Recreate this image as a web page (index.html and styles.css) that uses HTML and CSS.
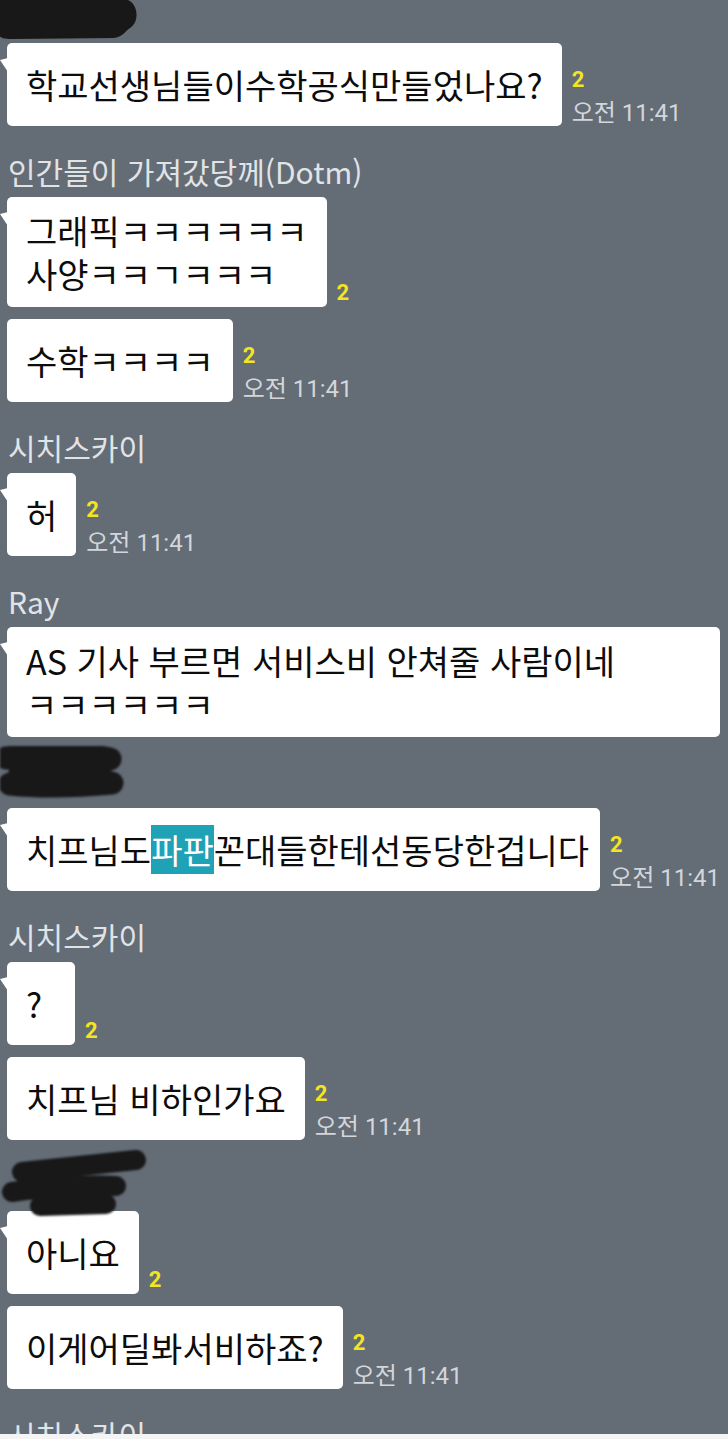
FILE: index.html
```html
<!DOCTYPE html>
<html lang="ko">
<head>
  <meta charset="UTF-8" />
  <meta name="viewport" content="width=device-width, initial-scale=1.0"/>
  <title>단톡방</title>
  <link rel="stylesheet" href="styles.css">
</head>
<body>

  <div class="screen">

    <div class="group">
      <div class="sender">
        <svg class="mark m1" width="145" height="42" viewBox="0 0 145 42">
          <path d="M0 0 L128 0 C138 4, 140 22, 130 28 C124 32, 124 36, 114 38 L12 39 C5 39, 0 38, 0 36 Z" />
        </svg>
      </div>
      <div class="row">
        <div class="bubble tail"><span>학교선생님들이수학공식만들었나요?</span></div>
        <div class="meta"><span class="unread">2</span><span class="time">오전 11:41</span></div>
      </div>
    </div>

    <div class="group">
      <div class="sender">인간들이 가져갔당께(Dotm)</div>
      <div class="row">
        <div class="bubble tail"><span>그래픽ㅋㅋㅋㅋㅋㅋ<br>사양ㅋㅋㄱㅋㅋㅋ</span></div>
        <div class="meta"><span class="unread">2</span></div>
      </div>
      <div class="row">
        <div class="bubble"><span>수학ㅋㅋㅋㅋ</span></div>
        <div class="meta"><span class="unread">2</span><span class="time">오전 11:41</span></div>
      </div>
    </div>

    <div class="group">
      <div class="sender">시치스카이</div>
      <div class="row">
        <div class="bubble tail"><span>허</span></div>
        <div class="meta"><span class="unread">2</span><span class="time">오전 11:41</span></div>
      </div>
    </div>

    <div class="group">
      <div class="sender">Ray</div>
      <div class="row">
        <div class="bubble tail"><span>AS 기사 부르면 서비스비 안쳐줄 사람이네 ㅋㅋㅋㅋㅋㅋ</span></div>
      </div>
    </div>

    <div class="group">
      <div class="sender">
        <svg class="scribble s2" width="130" height="56" viewBox="0 0 130 56">
          <path d="M6 12 C40 8, 80 7, 110 13" />
          <path d="M10 38 C40 41, 80 40, 112 37" />
          <path d="M20 26 L100 24" />
        </svg>
      </div>
      <div class="row">
        <div class="bubble tail"><span>치프님도<span class="hl">파판</span>꼰대들한테선동당한겁니다</span></div>
        <div class="meta"><span class="unread">2</span><span class="time">오전 11:41</span></div>
      </div>
    </div>

    <div class="group">
      <div class="sender">시치스카이</div>
      <div class="row">
        <div class="bubble tail"><span>?</span></div>
        <div class="meta"><span class="unread">2</span></div>
      </div>
      <div class="row">
        <div class="bubble"><span>치프님 비하인가요</span></div>
        <div class="meta"><span class="unread">2</span><span class="time">오전 11:41</span></div>
      </div>
    </div>

    <div class="group">
      <div class="sender">
        <svg class="scribble s3" width="150" height="72" viewBox="0 0 150 72">
          <path d="M22 22 L136 10" />
          <path d="M12 42 C40 38, 90 34, 116 36" />
          <path d="M40 56 L106 54" />
        </svg>
      </div>
      <div class="row">
        <div class="bubble tail"><span>아니요</span></div>
        <div class="meta"><span class="unread">2</span></div>
      </div>
      <div class="row">
        <div class="bubble"><span>이게어딜봐서비하죠?</span></div>
        <div class="meta"><span class="unread">2</span><span class="time">오전 11:41</span></div>
      </div>
    </div>

    <div class="group">
      <div class="sender">시치스카이</div>
    </div>

  </div>
  <div class="bottom-edge"></div>

</body>
</html>
```

FILE: styles.css
```css
:root {
  --bg: #646c76;
  --bubble: #ffffff;
  --text: #0c0c0c;
  --name: #e1e4e7;
  --time: #d3d6da;
  --unread: #f3e51f;
  --highlight: #1fa2b6;
  --ink: #181818;
}

body {
  margin: 0;
  background-color: var(--bg);
  font-family: "Noto Sans CJK KR", "Noto Sans", sans-serif;
}

.screen {
  height: 1434px;
  overflow: hidden;
  padding: 0 8px 0 7px;
  display: flex;
  flex-direction: column;
  gap: 28px;
}

.group {
  flex-shrink: 0;
  display: flex;
  flex-direction: column;
  gap: 12px;
}

.sender {
  position: relative;
  flex-shrink: 0;
  height: 34px;
  line-height: 34px;
  margin-bottom: -3px;
  padding-left: 1px;
  font-size: 30px;
  color: var(--name);
  white-space: nowrap;
}

/* blacked-out name, first one sits in flow */
.mark {
  display: block;
  margin-left: -8px;
  overflow: visible;
  fill: var(--ink);
}

.scribble {
  position: absolute;
  left: -7px;
  z-index: 1;
  fill: none;
  stroke: var(--ink);
  stroke-linecap: round;
  filter: blur(0.8px);
}

.s2 { top: -19px; stroke-width: 23px; }
.s3 { top: -18px; stroke-width: 20px; }

.row {
  flex-shrink: 0;
  display: flex;
  align-items: flex-end;
  gap: 10px;
}

.bubble {
  position: relative;
  box-sizing: border-box;
  display: flex;
  align-items: center;
  min-height: 83px;
  min-width: 68px;
  max-width: 713px;
  padding: 12px 19px;
  background: var(--bubble);
  border-radius: 5px;
  font-size: 34px;
  line-height: 43px;
  color: var(--text);
  word-break: keep-all;
}

.bubble.tail::before {
  content: "";
  position: absolute;
  left: -7px;
  top: 15px;
  width: 8px;
  height: 14px;
  background: var(--bubble);
  clip-path: polygon(100% 0, 0 15%, 100% 100%);
}

.hl {
  background: var(--highlight);
  color: #fff;
}

.meta {
  display: flex;
  flex-direction: column;
  align-items: flex-start;
  font-family: Roboto, "Noto Sans CJK KR", sans-serif;
}

.unread {
  font-size: 22px;
  line-height: 22px;
  font-weight: bold;
  color: var(--unread);
  padding-bottom: 3px;
}

.time {
  margin-top: 6px;
  font-size: 24px;
  line-height: 26px;
  color: var(--time);
  white-space: nowrap;
}

.bottom-edge {
  height: 5px;
  background: #f4f4f4;
}
```
